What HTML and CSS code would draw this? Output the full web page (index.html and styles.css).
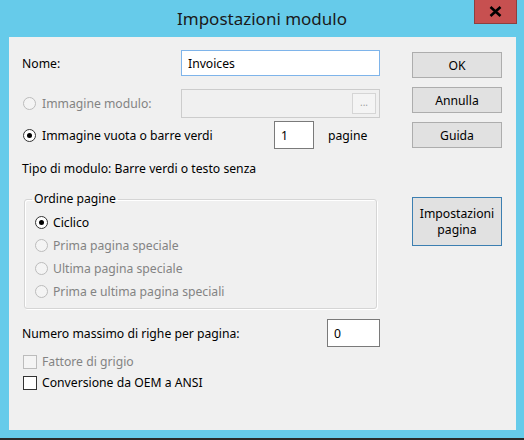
FILE: index.html
```html
<!DOCTYPE html>
<html lang="it">
<head>
    <meta charset="UTF-8">
    <title>Impostazioni modulo</title>
    <link rel="stylesheet" href="styles.css">
</head>
<body>
    <div class="window">
        <div class="titlebar">
            <span></span>
            <span class="title">Impostazioni modulo</span>
            <span class="close">
                <svg width="13" height="11" viewBox="0 0 13 11"><path d="M1.5 1 L11.5 10 M11.5 1 L1.5 10" stroke="#000" stroke-width="2.6"/></svg>
            </span>
        </div>

        <div class="client">
            <div class="main">
                <div class="row row-nome">
                    <label class="lbl">Nome:</label>
                    <input class="field focus" type="text" value="Invoices">
                </div>

                <div class="row row-img">
                    <label class="lbl disabled"><input type="radio" name="img" disabled>Immagine modulo:</label>
                    <div class="field readonly">
                        <span class="browse">...</span>
                    </div>
                </div>

                <div class="row row-vuota">
                    <label class="lbl wide"><input type="radio" name="img" checked>Immagine vuota o barre verdi</label>
                    <input class="field num" type="text" value="1">
                    <span class="suffix">pagine</span>
                </div>

                <p class="tipo">Tipo di modulo: Barre verdi o testo senza</p>

                <fieldset class="group">
                    <legend>Ordine pagine</legend>
                    <label class="opt"><input type="radio" name="ord" checked>Ciclico</label>
                    <label class="opt disabled"><input type="radio" name="ord" disabled>Prima pagina speciale</label>
                    <label class="opt disabled"><input type="radio" name="ord" disabled>Ultima pagina speciale</label>
                    <label class="opt disabled"><input type="radio" name="ord" disabled>Prima e ultima pagina speciali</label>
                </fieldset>

                <div class="row row-max">
                    <label class="lbl grow">Numero massimo di righe per pagina:</label>
                    <input class="field max" type="text" value="0">
                </div>

                <label class="check disabled"><input type="checkbox" disabled>Fattore di grigio</label>
                <label class="check"><input type="checkbox">Conversione da OEM a ANSI</label>
            </div>

            <div class="side">
                <button class="btn">OK</button>
                <button class="btn">Annulla</button>
                <button class="btn">Guida</button>
                <button class="btn default">Impostazioni<br>pagina</button>
            </div>
        </div>
    </div>
</body>
</html>
```

FILE: styles.css
```css
html, body {
    margin: 0;
    padding: 0;
}
body {
    background-color: #2b2b2b;
    font-family: "Noto Sans", "Liberation Sans", sans-serif;
    font-size: 12.2px;
    color: #000;
    width: 524px;
    height: 440px;
    overflow: hidden;
}
.window {
    box-sizing: border-box;
    height: 438px;
    background-color: #66cbea;
    padding: 0 8px 8px 9px;
    display: flex;
    flex-direction: column;
}
.titlebar {
    height: 37px;
    margin: 0 -8px 0 -9px;
    padding-right: 7px;
    display: grid;
    grid-template-columns: 1fr auto 1fr;
}
.title {
    font-size: 17px;
    line-height: 37px;
    color: #1a1a1a;
    padding-left: 7px;
}
.close {
    justify-self: end;
    box-sizing: border-box;
    width: 43px;
    height: 24px;
    background-color: #c75050;
    border: 1px solid #8e3f3f;
    border-top: none;
    display: flex;
    align-items: center;
    justify-content: center;
}
.client {
    flex: 1;
    background-color: #f0f0f0;
    display: flex;
    padding: 13px 14px 0 13px;
    gap: 32px;
}
.main {
    width: 358px;
    display: flex;
    flex-direction: column;
}
.side {
    width: 90px;
    padding-top: 2px;
    display: flex;
    flex-direction: column;
    gap: 9px;
}
.row {
    display: flex;
    align-items: center;
}
.row-nome {
    height: 26px;
}
.row-img {
    height: 29px;
    margin-top: 13px;
}
.row-vuota {
    height: 28px;
    margin-top: 3px;
}
.row-max {
    height: 28px;
    margin-top: 10px;
}
.lbl {
    width: 159px;
    display: flex;
    align-items: center;
}
.lbl.wide {
    width: 252px;
}
.lbl.grow {
    flex: 1;
}
.disabled {
    color: #838383;
}
.field {
    box-sizing: border-box;
    height: 100%;
    flex: 1;
    margin: 0;
    border: 1px solid #7a7a7a;
    background: #fff;
    font-family: inherit;
    font-size: 12.2px;
    padding: 0 6px;
    color: #000;
    outline: none;
}
.field.focus {
    border-color: #7eb4ea;
}
.field.readonly {
    background: #f0f0f0;
    border-color: #cccccc;
    display: flex;
    justify-content: flex-end;
    align-items: center;
    padding: 0 3px;
}
.browse {
    box-sizing: border-box;
    width: 24px;
    height: 21px;
    border: 1px solid #d5d5d5;
    background: #f4f4f4;
    color: #a0a0a0;
    font-size: 10px;
    line-height: 16px;
    text-align: center;
}
.field.num {
    flex: none;
    width: 40px;
}
.suffix {
    margin-left: 14px;
}
.field.max {
    flex: none;
    width: 53px;
}
.tipo {
    margin: 12px 0 0;
    line-height: 16px;
}

/* group box */
.group {
    margin: 14px 3px 0 2px;
    padding: 4px 0 5px 10px;
    border: 1px solid #d5d5d5;
    border-radius: 3px;
    box-shadow: inset 1px 1px 0 #fff, 1px 1px 0 #fff;
}
.group legend {
    padding: 0 2px;
    margin-left: -3px;
    line-height: 16px;
}
.opt {
    display: flex;
    align-items: center;
    height: 23px;
}

/* radios and checks */
input[type=radio], input[type=checkbox] {
    appearance: none;
    -webkit-appearance: none;
    box-sizing: border-box;
    width: 13px;
    height: 13px;
    margin: 0 6px 0 1px;
    border: 1px solid #333;
    background: #fff;
    flex: none;
}
.opt input[type=radio] {
    margin: 0 5px 0 0;
}
input[type=radio] {
    border-radius: 50%;
    display: grid;
    place-content: center;
}
input[type=radio]:checked::before {
    content: "";
    width: 5px;
    height: 5px;
    border-radius: 50%;
    background: #000;
}
input:disabled {
    border-color: #bcbcbc;
    background: #f4f4f4;
}
.check {
    display: flex;
    align-items: center;
    height: 21px;
}
.check.disabled {
    margin-top: 4px;
}
.check input {
    width: 14px;
    height: 14px;
    margin-right: 5px;
}

/* buttons */
.btn {
    height: 26px;
    margin: 0;
    padding: 0;
    font-family: inherit;
    font-size: 12.2px;
    color: #000;
    background-color: #e1e1e1;
    border: 1px solid #adadad;
}
.btn.default {
    height: 49px;
    margin-top: 40px;
    border-color: #3c7fb1;
    line-height: 16px;
}
```
